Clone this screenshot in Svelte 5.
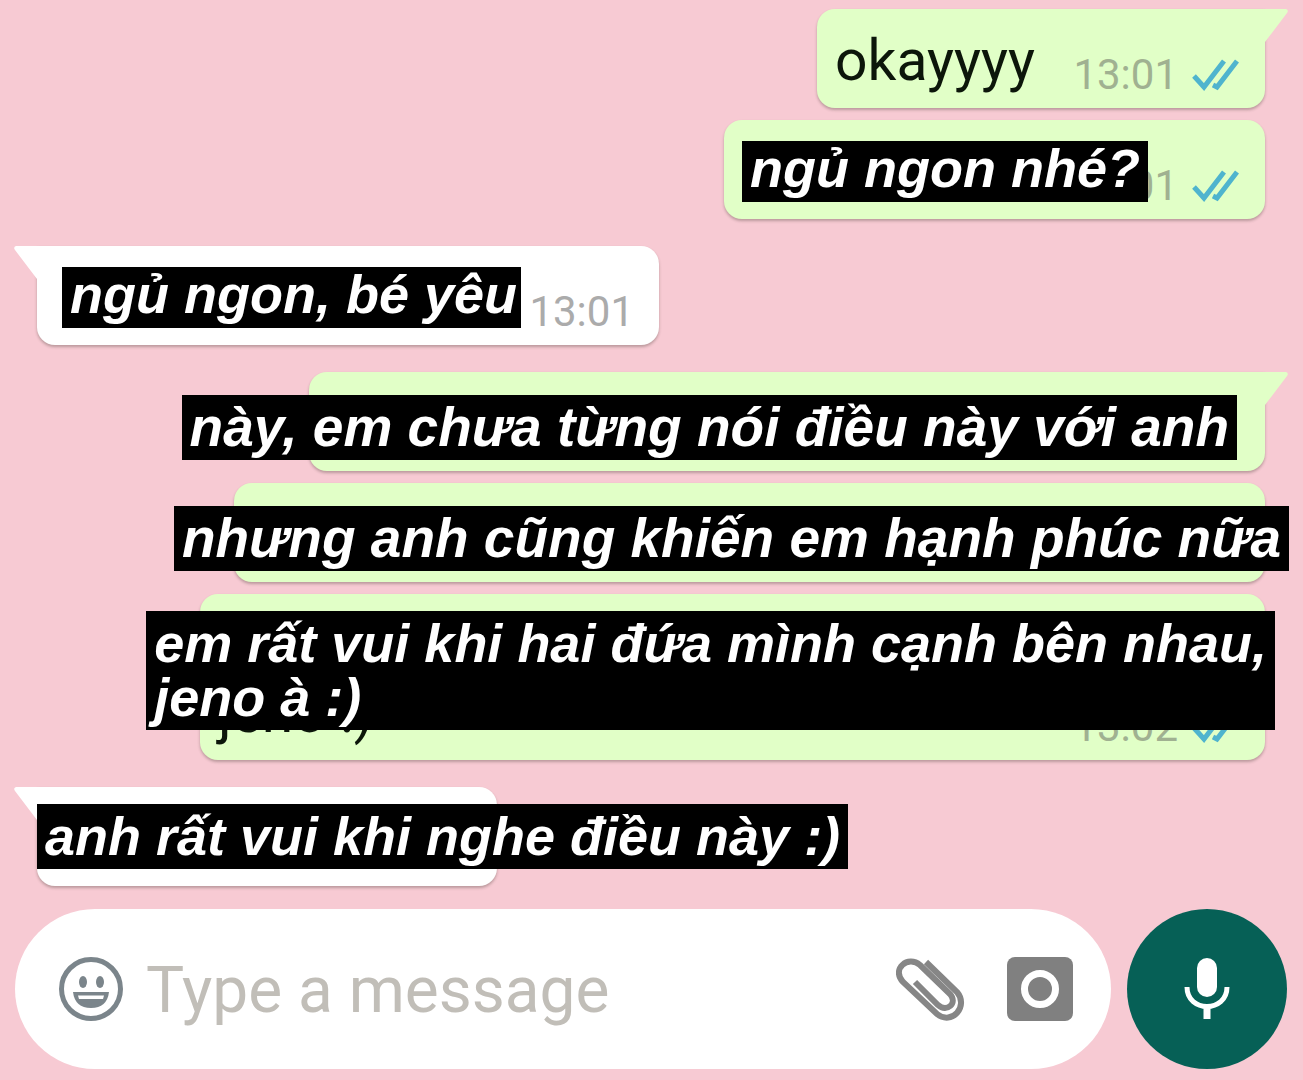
<script>
  const messages = [
    { side: 'out', tail: true, text: 'okayyyy', time: '13:01', width: 448 },
    { side: 'out', time: '13:01', width: 541, caption: 'ngủ ngon nhé?', fit: 'snug', edge: 117 },
    { side: 'in', tail: true, time: '13:01', width: 622, caption: 'ngủ ngon, bé yêu', fit: 'snug', edge: 25 },
    { side: 'out', tail: true, width: 956, caption: 'này, em chưa từng nói điều này với anh', fit: 'roomy', edge: 28 },
    { side: 'out', width: 1031, caption: 'nhưng anh cũng khiến em hạnh phúc nữa', fit: 'roomy', edge: -24 },
    { side: 'out', text: '\njeno :)', time: '13:02', width: 1065, caption: 'em rất vui khi hai đứa mình cạnh bên nhau,\njeno à :)', fit: 'tall', edge: -10 },
    { side: 'in', tail: true, width: 460, caption: 'anh rất vui khi nghe điều này :)', fit: 'tall', edge: 0 }
  ];
  let draft = $state('');
</script>

<div class="screen">
  <main class="chat">
    {#each messages as m}
      <article class="bubble {m.side}" class:first={m.tail} style="width: {m.width}px">
        {#if m.tail}
          <svg class="tail" viewBox="0 0 26 36" aria-hidden="true">
            <path d="M0 0H23Q26 1 24 4L2 33V36H0Z" />
          </svg>
        {/if}
        <p class="text">{m.text ?? ''}</p>
        {#if m.time}
          <div class="meta">
            <time>{m.time}</time>
            {#if m.side === 'out'}
              <svg class="ticks" viewBox="0 0 48 32" aria-label="Read">
                <path d="M2 17L12 28L32 2M21 26L25 28L45 2" />
              </svg>
            {/if}
          </div>
        {/if}
        {#if m.caption}
          <p class="caption {m.fit}" style="--edge: {m.edge}px">{m.caption}</p>
        {/if}
      </article>
    {/each}
  </main>

  <form class="composer" onsubmit={(e) => e.preventDefault()}>
    <div class="field">
      <button type="button" class="icon" aria-label="Emoji">
        <svg viewBox="0 0 66 66">
          <circle cx="33" cy="33" r="29.500" fill="none" stroke="#7b858b" stroke-width="5" />
          <ellipse cx="25" cy="26" rx="4" ry="6" fill="#7b858b" />
          <ellipse cx="42" cy="26" rx="4" ry="6" fill="#7b858b" />
          <path d="M15 36H51Q49 52 33 52Q17 52 15 36Z" fill="#7b858b" />
          <path d="M20 39.500H46L45 43H21Z" fill="#fff" />
        </svg>
      </button>
      <input type="text" placeholder="Type a message" aria-label="Type a message" bind:value={draft} />
      <button type="button" class="icon clip" aria-label="Attach">
        <svg viewBox="0 0 70 66">
          <path
            d="M30 6L61 36C73 50 56 70 41 58L7 26C-5 13 12 -1 24 9L54 38C62 47 51 57 42 49L19 26"
            fill="none" stroke="#868686" stroke-width="6" />
        </svg>
      </button>
      <button type="button" class="icon" aria-label="Camera">
        <svg viewBox="0 0 66 66">
          <rect y="1" width="66" height="64" rx="8" fill="#808080" />
          <circle cx="33" cy="33" r="15.500" fill="none" stroke="#fff" stroke-width="7" />
        </svg>
      </button>
    </div>
    <button type="button" class="mic" aria-label="Record voice message">
      <svg viewBox="0 0 48 64">
        <rect x="14" y="1" width="20" height="39" rx="10" fill="#fff" />
        <path d="M4 30C4 56 44 56 44 30" fill="none" stroke="#fff" stroke-width="5" />
        <path d="M24 49V62" stroke="#fff" stroke-width="7" />
      </svg>
    </button>
  </form>
</div>

<style>
  :global(body) {
    margin: 0;
    background: #f7cad3;
  }
  .screen {
    box-sizing: border-box;
    min-height: 100vh;
    display: flex;
    flex-direction: column;
    justify-content: space-between;
    padding: 9px 16px 11px 15px;
    overflow: hidden;
    background: #f7cad3;
    font-family: Roboto, 'Liberation Sans', sans-serif;
  }
  .chat {
    display: flex;
    flex-direction: column;
    padding: 0 22px;
  }
  .bubble {
    box-sizing: border-box;
    position: relative;
    display: flex;
    align-items: flex-end;
    justify-content: space-between;
    padding: 18px 25px 14px 18px;
    border-radius: 18px;
    box-shadow: 0 2px 3px rgba(60, 50, 40, 0.32);
    margin-top: 12px;
  }
  .bubble.first {
    margin-top: 27px;
  }
  .bubble.first:first-child {
    margin-top: 0;
  }
  .out {
    align-self: flex-end;
    background: #e1ffc7;
    color: #a0b191;
  }
  .in {
    align-self: flex-start;
    background: #fff;
    color: #ababab;
  }
  .out.first {
    border-top-right-radius: 0;
  }
  .in.first {
    border-top-left-radius: 0;
  }
  .tail {
    position: absolute;
    top: 0;
    left: calc(100% - 2px);
    width: 26px;
    height: 36px;
    fill: #e1ffc7;
  }
  .in .tail {
    left: auto;
    right: calc(100% - 2px);
    transform: scaleX(-1);
    fill: #fff;
  }
  .text {
    margin: 0;
    min-height: 67px;
    font-size: 57px;
    line-height: 67px;
    color: #0c160a;
    white-space: pre-line;
  }
  .meta {
    display: flex;
    align-items: center;
    gap: 14px;
    font-size: 42px;
    line-height: 38px;
  }
  .ticks {
    width: 48px;
    height: 32px;
    fill: none;
    stroke: #4fb4ce;
    stroke-width: 5;
  }
  .caption {
    position: absolute;
    right: var(--edge);
    margin: 0;
    background: #000;
    color: #fff;
    font: italic bold 54px/54px 'Liberation Sans', Arial, sans-serif;
    white-space: pre;
  }
  .in .caption {
    right: auto;
    left: var(--edge);
  }
  .snug {
    top: 21px;
    padding: 0 8px 7px;
  }
  .in .snug {
    padding-right: 4px;
  }
  .roomy {
    top: 23px;
    padding: 5px 8px 6px;
    font-size: 55px;
  }
  .tall {
    top: 17px;
    padding: 5px 8px 6px;
  }
  .composer {
    display: flex;
    gap: 16px;
  }
  .field {
    flex: 1;
    min-width: 0;
    box-sizing: border-box;
    height: 160px;
    display: flex;
    align-items: center;
    padding: 0 38px 0 43px;
    border-radius: 80px;
    background: #fff;
  }
  input {
    flex: 1;
    min-width: 0;
    margin: 0 20px 0 22px;
    padding: 4px 0 0;
    border: 0;
    outline: 0;
    background: none;
    color: #222;
    font: 64px/80px Roboto, 'Liberation Sans', sans-serif;
  }
  input::placeholder {
    color: #c1beb8;
    opacity: 1;
  }
  button {
    padding: 0;
    border: 0;
    background: none;
    cursor: pointer;
  }
  .icon {
    flex: none;
    display: flex;
  }
  .icon svg {
    width: 66px;
    height: 66px;
  }
  .clip {
    margin-right: 41px;
  }
  .clip svg {
    width: 70px;
  }
  .mic {
    flex: none;
    display: grid;
    place-items: center;
    width: 160px;
    height: 160px;
    border-radius: 50%;
    background: #066056;
  }
  .mic svg {
    width: 48px;
    height: 64px;
  }
</style>
